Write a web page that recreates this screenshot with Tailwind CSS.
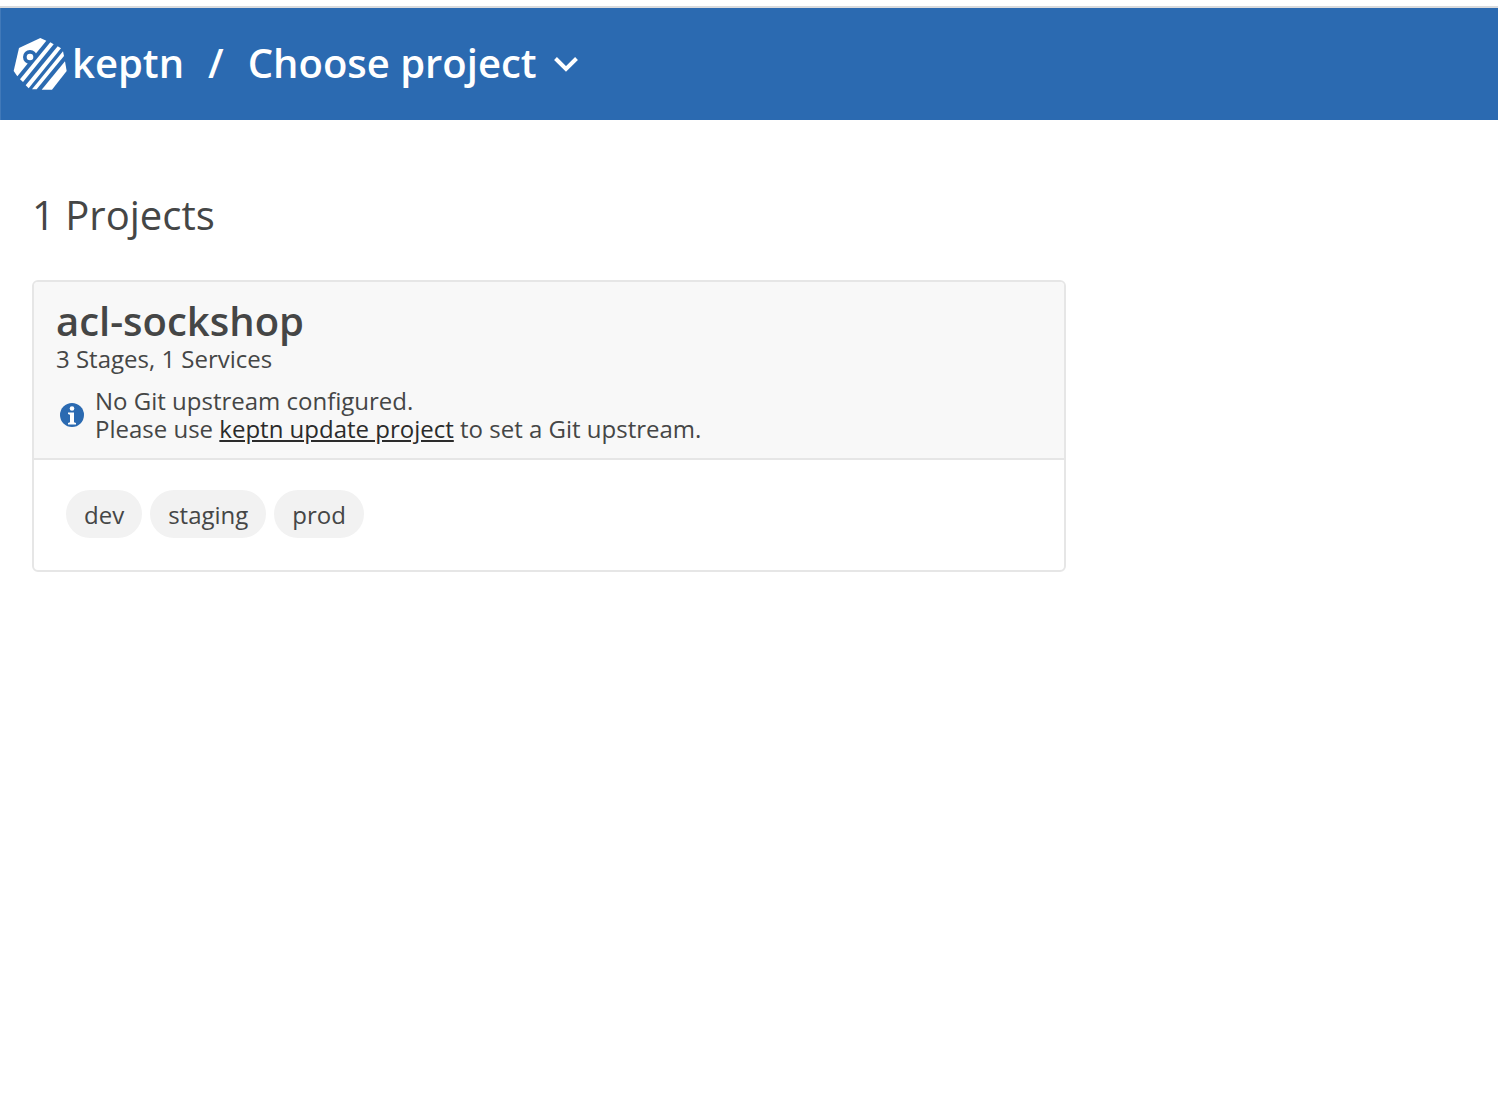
<!DOCTYPE html>
<html lang="en">
<head>
<meta charset="utf-8">
<meta name="viewport" content="width=device-width, initial-scale=1">
<title>keptn</title>
<script src="https://cdn.jsdelivr.net/npm/@tailwindcss/browser@4"></script>
</head>
<body class="min-h-screen bg-white font-['Open_Sans',sans-serif] text-2xl text-[#454646]">
<header class="mt-[6px] border-t-2 border-[#dadbdd]">
  <nav class="flex h-28 items-center border-l border-[#4179b9] bg-[#2b6ab1] pl-3 text-[40px] leading-14 font-semibold text-white" aria-label="Main">
    <a href="#" class="flex items-center gap-[5px]">
      <svg class="h-[52px] w-[54px]" viewBox="39 38 162 156" fill="#fff" aria-hidden="true">
        <path d="M121 38 139 46 52 153 41 137 57 68Z"/>
        <circle cx="90" cy="95" r="21" fill="#2b6ab1"/>
        <circle cx="90" cy="95" r="10"/>
        <path d="M151 51 161 57 69 170 60 162Z"/>
        <path d="M173 63 183 69 86 189 77 180Z"/>
        <path d="M189 78 192 92 110 192 96 192Z"/>
        <path d="M195 108 200 137 156 193 125 193Z"/>
      </svg>
      <span class="pb-[2px]">keptn</span>
    </a>
    <span class="px-6 pb-[2px]">/</span>
    <button type="button" class="flex items-center gap-4">
      <span class="pb-[2px]">Choose project</span>
      <svg class="h-[16px] w-[26px]" viewBox="0 0 26 16" fill="none" stroke="#fff" stroke-width="4" aria-hidden="true"><path d="M2.500 2.500 13 13 23.500 2.500"/></svg>
    </button>
  </nav>
</header>
<main class="px-8 pt-[67px]">
  <h1 class="text-[40px] leading-14">1 Projects</h1>
  <article class="mt-[37px] w-full max-w-[1034px] overflow-hidden rounded-md border-2 border-[#e6e6e6]">
    <div class="border-b-2 border-[#e6e6e6] bg-[#f8f8f8] px-[22px] py-[15px]">
      <h2 class="text-[40px] leading-12 font-semibold">acl-sockshop</h2>
      <p class="leading-7">3 Stages, 1 Services</p>
      <div class="mt-[14px] flex items-center gap-[11px] pl-1">
        <svg class="size-6 shrink-0" viewBox="0 0 24 24" aria-hidden="true"><circle cx="12" cy="12" r="12" fill="#2b6ab1"/><circle cx="12" cy="5.500" r="2.300" fill="#fff"/><path fill="#fff" d="M8 9.500h6v9.800l2 .6v1.600H8v-1.600l2-.6v-7.600l-2-.6z"/></svg>
        <p class="leading-7">No Git upstream configured.<br>Please use <a href="#" class="text-[#2b2b2b] underline">keptn update project</a> to set a Git upstream.</p>
      </div>
    </div>
    <ul class="flex flex-wrap gap-2 px-8 pt-[30px] pb-8">
      <li class="flex h-12 items-center rounded-full bg-[#f2f2f2] px-[18px] pt-[2px]">dev</li>
      <li class="flex h-12 items-center rounded-full bg-[#f2f2f2] px-[18px] pt-[2px]">staging</li>
      <li class="flex h-12 items-center rounded-full bg-[#f2f2f2] px-[18px] pt-[2px]">prod</li>
    </ul>
  </article>
</main>
</body>
</html>
